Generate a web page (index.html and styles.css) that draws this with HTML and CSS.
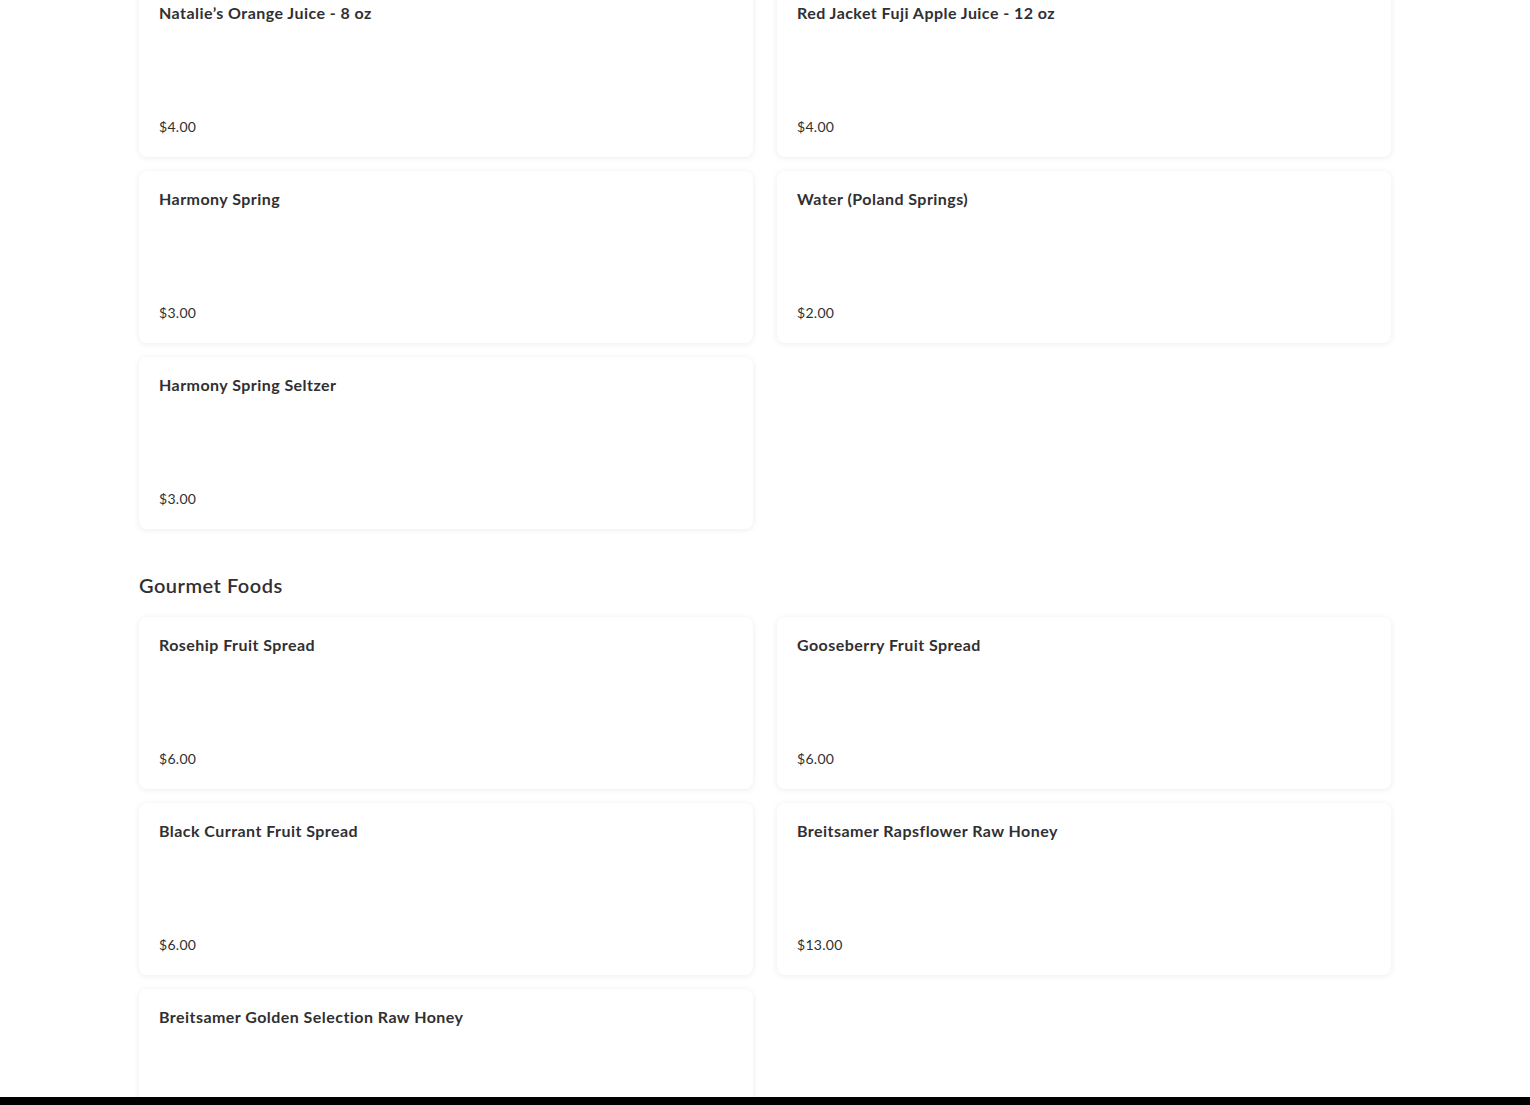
FILE: index.html
```html
<!DOCTYPE html>
<html lang="en">
<head>
    <meta charset="UTF-8">
    <title>Menu</title>
    <link rel="stylesheet" href="styles.css">
</head>
<body>
    <div class="menu">
        <!-- Beverages (scrolled, heading off screen) -->
        <section class="category">
            <div class="items">
                <div class="item">
                    <h3>Natalie’s Orange Juice - 8 oz</h3>
                    <p class="price">$4.00</p>
                </div>
                <div class="item">
                    <h3>Red Jacket Fuji Apple Juice - 12 oz</h3>
                    <p class="price">$4.00</p>
                </div>
                <div class="item">
                    <h3>Harmony Spring</h3>
                    <p class="price">$3.00</p>
                </div>
                <div class="item">
                    <h3>Water (Poland Springs)</h3>
                    <p class="price">$2.00</p>
                </div>
                <div class="item">
                    <h3>Harmony Spring Seltzer</h3>
                    <p class="price">$3.00</p>
                </div>
            </div>
        </section>

        <section class="category">
            <h2>Gourmet Foods</h2>
            <div class="items">
                <div class="item">
                    <h3>Rosehip Fruit Spread</h3>
                    <p class="price">$6.00</p>
                </div>
                <div class="item">
                    <h3>Gooseberry Fruit Spread</h3>
                    <p class="price">$6.00</p>
                </div>
                <div class="item">
                    <h3>Black Currant Fruit Spread</h3>
                    <p class="price">$6.00</p>
                </div>
                <div class="item">
                    <h3>Breitsamer Rapsflower Raw Honey</h3>
                    <p class="price">$13.00</p>
                </div>
                <div class="item">
                    <h3>Breitsamer Golden Selection Raw Honey</h3>
                </div>
            </div>
        </section>
    </div>

    <div class="footer-edge"></div>
</body>
</html>
```

FILE: styles.css
```css
* {
    margin: 0;
    padding: 0;
    box-sizing: border-box;
}

body {
    font-family: 'Lato', 'Noto Sans', sans-serif;
    background: #fff;
    color: #303033;
    overflow: hidden;
}

.menu {
    width: 1252px;
    margin: -15px 0 0 139px;
}

.category + .category {
    margin-top: 44px;
}

.category h2 {
    font-size: 20px;
    font-weight: 600;
    line-height: 24px;
    margin-bottom: 20px;
    letter-spacing: 0.5px;
}

.items {
    display: grid;
    grid-template-columns: 1fr 1fr;
    column-gap: 24px;
    row-gap: 14px;
}

.item {
    height: 172px;
    padding: 20px;
    background: #fff;
    border-radius: 8px;
    box-shadow: 0 1px 6px rgba(0, 0, 0, 0.08);
    display: flex;
    flex-direction: column;
    justify-content: space-between;
}

.item h3 {
    font-size: 16px;
    font-weight: 700;
    line-height: 16px;
    letter-spacing: 0.45px;
}

.price {
    font-size: 14px;
    line-height: 20px;
    letter-spacing: 0.3px;
}

.footer-edge {
    position: fixed;
    left: 0;
    right: 0;
    bottom: 0;
    height: 8px;
    background: #000;
}
```
